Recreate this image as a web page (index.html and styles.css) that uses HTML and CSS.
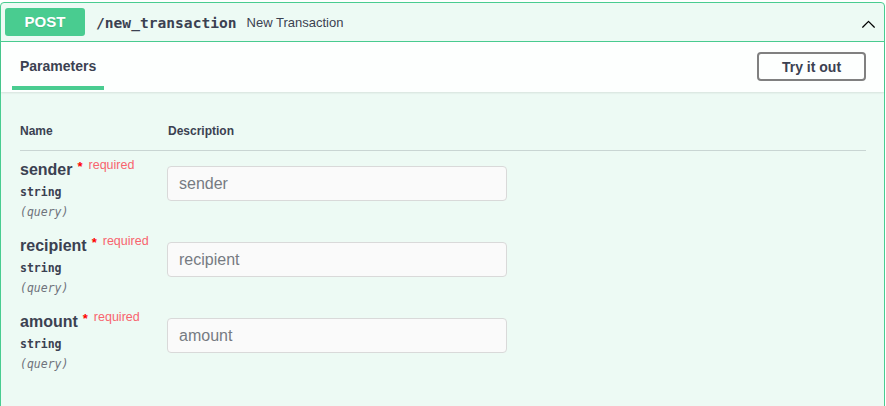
FILE: index.html
```html
<!DOCTYPE html>
<html>
<head>
<meta charset="utf-8">
<link rel="stylesheet" href="styles.css">
</head>
<body>
<div class="opblock">
  <div class="summary">
    <span class="method">POST</span>
    <span class="path">/new_transaction</span>
    <span class="summary-desc">New Transaction</span>
    <svg class="arrow" width="17" height="17" viewBox="0 0 20 20"><path d="M17.418 14.908c-.29.29-.764.29-1.053 0l-6.365-6.36-6.36 6.36c-.29.29-.76.29-1.05 0-.29-.29-.29-.76 0-1.05l6.89-6.89c.29-.29.76-.29 1.05 0l6.89 6.89c.3.29.3.76 0 1.05z" fill="#000"/></svg>
  </div>
  <div class="tab-header">
    <div class="tab">Parameters</div>
    <button class="try-out">Try it out</button>
  </div>
  <div class="params">
    <div class="head-row">
      <div class="col-name">Name</div>
      <div class="col-desc">Description</div>
    </div>
    <div class="row">
      <div class="col-name">
        <div class="pname">sender<span class="star">*</span><span class="req">required</span></div>
        <div class="ptype">string</div>
        <div class="pin">(query)</div>
      </div>
      <div class="col-desc"><input class="field" type="text" placeholder="sender"></div>
    </div>
    <div class="row">
      <div class="col-name">
        <div class="pname">recipient<span class="star">*</span><span class="req">required</span></div>
        <div class="ptype">string</div>
        <div class="pin">(query)</div>
      </div>
      <div class="col-desc"><input class="field" type="text" placeholder="recipient"></div>
    </div>
    <div class="row">
      <div class="col-name">
        <div class="pname">amount<span class="star">*</span><span class="req">required</span></div>
        <div class="ptype">string</div>
        <div class="pin">(query)</div>
      </div>
      <div class="col-desc"><input class="field" type="text" placeholder="amount"></div>
    </div>
  </div>
</div>
</body>
</html>
```

FILE: styles.css
```css
html, body {
  margin: 0;
  padding: 0;
  background: #fff;
}
body {
  padding-top: 2px;
  font-family: "Liberation Sans", Arial, sans-serif;
  color: #3b4151;
  overflow: hidden;
}
.opblock {
  width: 885px;
  box-sizing: border-box;
  height: 420px;
  border: 1px solid #49cc90;
  border-radius: 4px;
  background: #edfaf4;
}
.summary {
  display: flex;
  align-items: center;
  height: 38px;
  padding: 0 5px 0 4px;
  border-bottom: 1px solid #49cc90;
}
.method {
  width: 80px;
  height: 28px;
  line-height: 28px;
  background: #49cc90;
  color: #fff;
  border-radius: 3px;
  text-align: center;
  font-weight: bold;
  font-size: 15px;
  text-shadow: 0 1px 0 rgba(0,0,0,.1);
}
.path {
  font-family: "DejaVu Sans Mono", monospace;
  font-weight: bold;
  font-size: 14.6px;
  padding: 0 10px 0 11px;
  color: #3b4151;
}
.summary-desc {
  font-size: 13px;
  flex: 1;
}
.arrow {
  margin: 2px 2px 0 0;
}
.tab-header {
  display: flex;
  align-items: center;
  justify-content: space-between;
  height: 50px;
  background: rgba(255,255,255,.85);
  box-shadow: 0 1px 2px rgba(0,0,0,.1);
  padding: 0 18px 0 11px;
}
.tab {
  align-self: stretch;
  display: flex;
  align-items: center;
  padding: 4px 8px 0;
  font-size: 14px;
  font-weight: bold;
  border-bottom: 4px solid #49cc90;
  box-sizing: border-box;
  height: 48px;
}
.try-out {
  width: 109px;
  height: 29px;
  margin-top: -1px;
  background: transparent;
  border: 2px solid #808080;
  border-radius: 4px;
  font-family: "Liberation Sans", Arial, sans-serif;
  font-size: 14px;
  font-weight: bold;
  color: #3b4151;
  padding: 0;
}
.params {
  padding: 21px 18px 0 19px;
}
.head-row {
  display: flex;
  font-size: 12px;
  font-weight: bold;
  line-height: 15px;
  padding: 11px 0 11px;
  border-bottom: 1px solid rgba(59,65,81,.2);
}
.col-name {
  width: 147px;
  flex: none;
}
.head-row .col-name {
  width: 148px;
}
.col-desc {
  flex: 1;
}
.row {
  display: flex;
  height: 76px;
  box-sizing: border-box;
  padding-top: 10px;
}
.pname {
  font-size: 16px;
  font-weight: bold;
  line-height: 18px;
  height: 18px;
}
.star {
  position: relative;
  top: -4px;
  color: red;
  font-size: 13px;
  margin-left: 5px;
}
.req {
  position: relative;
  top: -6px;
  color: #f8646e;
  font-size: 12.5px;
  font-weight: normal;
  margin-left: 6px;
}
.ptype {
  font-family: "DejaVu Sans Mono", monospace;
  font-size: 11.5px;
  font-weight: bold;
  line-height: 14px;
  margin-top: 6px;
}
.pin {
  font-family: "DejaVu Sans Mono", monospace;
  font-size: 11.5px;
  font-style: italic;
  color: #6f737c;
  line-height: 14px;
  margin-top: 6px;
}
.field {
  display: block;
  margin-top: 5px;
  width: 340px;
  height: 35px;
  box-sizing: border-box;
  padding: 0 11px;
  background: #fafafa;
  border: 1px solid #d9d9d9;
  border-radius: 4px;
  font-family: "Liberation Sans", Arial, sans-serif;
  font-size: 16px;
  color: #3b4151;
  outline: none;
}
.field::placeholder {
  color: #767a82;
}
```
